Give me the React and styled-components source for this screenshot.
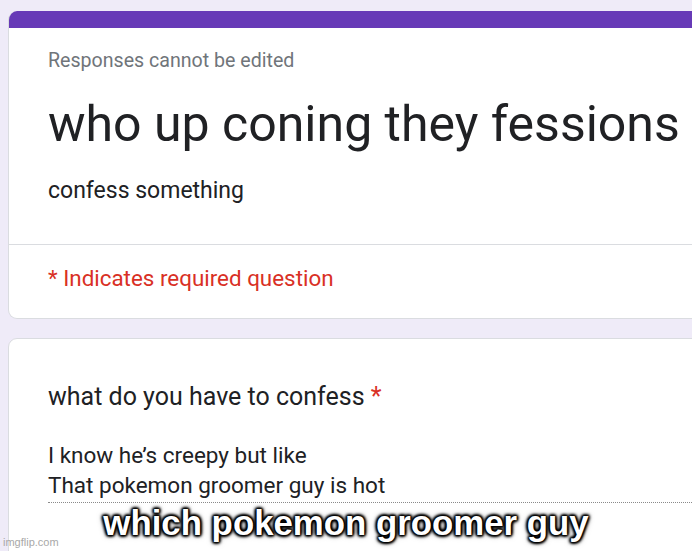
import React from 'react';
import styled, { createGlobalStyle } from 'styled-components';

const GlobalStyle = createGlobalStyle`
  html, body {
    margin: 0;
    padding: 0;
    background: #efebf8;
    overflow: hidden;
  }
  body {
    font-family: Roboto, "Noto Sans", Arial, sans-serif;
  }
`;

const Page = styled.div`
  position: relative;
  width: 692px;
  height: 551px;
  overflow: hidden;
  background: #efebf8;
  padding-top: 11px;
  box-sizing: border-box;
`;

const Card = styled.div`
  width: 780px;
  margin-left: 8px;
  margin-bottom: 19px;
  background: #fff;
  border: 1px solid #dadce0;
  border-radius: 9px;
  overflow: hidden;
  ${p => p.$accent && `border-top: none;`}
  ${p => p.$tall && `padding-bottom: 120px;`}
`;

const AccentBar = styled.div`
  height: 17px;
  background: #673ab7;
`;

const Header = styled.div`
  padding: 21px 40px 39px 39px;
  border-bottom: 1px solid #dadce0;
`;

const Notice = styled.div`
  font-size: 19.6px;
  line-height: 24px;
  color: #70757a;
`;

const Title = styled.h1`
  margin: 21px 0 0;
  font-size: 50px;
  line-height: 60px;
  font-weight: 400;
  color: #202124;
  white-space: nowrap;
`;

const Description = styled.div`
  margin-top: 23px;
  font-size: 23px;
  line-height: 28px;
  color: #202124;
`;

const Required = styled.div`
  padding: 19px 39px 26px;
  font-size: 22.4px;
  line-height: 28px;
  color: #d93025;
`;

const Question = styled.div`
  padding: 43px 39px 0;
`;

const QuestionTitle = styled.div`
  font-size: 25px;
  line-height: 30px;
  color: #202124;
`;

const Star = styled.span`
  color: #d93025;
`;

const Answer = styled.div`
  margin-top: 28px;
  font-size: 22.5px;
  line-height: 30px;
  color: #202124;
  border-bottom: 1px dotted #8a8a8a;
  padding-bottom: 2px;
`;

const Caption = styled.div`
  position: absolute;
  left: 0;
  right: 0;
  top: 503px;
  text-align: center;
  font-family: "Liberation Sans", Arial, sans-serif;
  font-weight: 700;
  font-size: 34.8px;
  line-height: 40px;
  color: #fff;
  text-shadow:
    0 0 1px #000, 0 0 2px #000, 0 0 3px #000, 0 0 4px #000,
    1px 1px 3px #000, -1px -1px 3px #000, 1px -1px 3px #000, -1px 1px 3px #000,
    0 0 6px rgba(0, 0, 0, 0.6);
`;

const Watermark = styled.div`
  position: absolute;
  left: 3px;
  bottom: 3px;
  font-family: "Liberation Sans", Arial, sans-serif;
  font-size: 11px;
  color: #a8a8a8;
`;

export default function App() {
  return (
    <Page>
      <GlobalStyle />
      <Card $accent>
        <AccentBar />
        <Header>
          <Notice>Responses cannot be edited</Notice>
          <Title>who up coning they fessions</Title>
          <Description>confess something</Description>
        </Header>
        <Required>* Indicates required question</Required>
      </Card>
      <Card $tall>
        <Question>
          <QuestionTitle>what do you have to confess <Star>*</Star></QuestionTitle>
          <Answer>
            I know he’s creepy but like
            <br />
            That pokemon groomer guy is hot
          </Answer>
        </Question>
      </Card>
      <Caption>which pokemon groomer guy</Caption>
      <Watermark>imgflip.com</Watermark>
    </Page>
  );
}
